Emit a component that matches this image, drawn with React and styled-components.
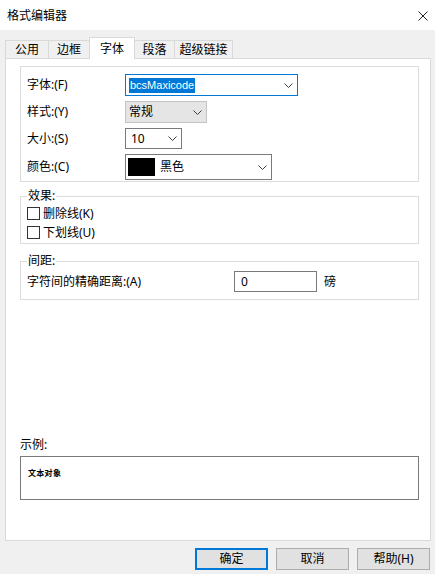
import React from 'react';
import styled, { createGlobalStyle } from 'styled-components';

const Global = createGlobalStyle`
  html, body { margin: 0; padding: 0; background: #f0f0f0; }
  body {
    font-family: "Noto Sans", "Noto Sans CJK SC", sans-serif;
    font-size: 12px;
    color: #000;
  }
  * { box-sizing: border-box; }
`;

const Window = styled.div`
  width: 435px;
  height: 574px;
  background: #f0f0f0;
  display: flex;
  flex-direction: column;
  overflow: hidden;
  font-family: "Noto Sans", "Noto Sans CJK SC", sans-serif;
  font-size: 12px;
  line-height: 14px;
`;

const TitleBar = styled.div`
  height: 30px;
  flex: none;
  background: #fff;
  display: flex;
  align-items: center;
  justify-content: space-between;
  padding: 0 7px;
`;

const Title = styled.span`
  font-size: 12px;
  line-height: 14px;
  margin-top: 1px;
`;

const CloseIcon = styled.svg`
  width: 10px;
  height: 10px;
  margin-top: 2px;
`;

const TabStrip = styled.div`
  flex: none;
  height: 21px;
  margin-top: 7px;
  padding-left: 5px;
  display: flex;
  align-items: flex-end;
  position: relative;
  z-index: 1;
`;

const Tab = styled.div`
  width: ${p => p.$w}px;
  height: ${p => (p.$active ? 22 : 18)}px;
  margin-bottom: ${p => (p.$active ? -1 : 0)}px;
  margin-left: -1px;
  &:first-child { margin-left: 0; }
  border: 1px solid #d9d9d9;
  border-bottom: none;
  background: ${p => (p.$active ? '#fff' : '#f0f0f0')};
  display: flex;
  align-items: center;
  justify-content: center;
  padding-top: ${p => (p.$active ? 0 : 1)}px;
  font-size: 12px;
  position: relative;
  z-index: ${p => (p.$active ? 2 : 1)};
`;

const Panel = styled.div`
  flex: none;
  height: 483px;
  margin: 0 4px 0 5px;
  background: #fff;
  border: 1px solid #d9d9d9;
  display: flex;
  flex-direction: column;
  padding: 7px 11px 40px 14px;
`;

const FontGroup = styled.div`
  border: 1px solid #dcdcdc;
  padding: 7px 0 1px 6px;
  display: grid;
  grid-template-columns: 98px auto;
  row-gap: 5px;
  align-items: center;
  justify-items: start;
`;

const Label = styled.span`
  font-size: 12px;
  line-height: 14px;
  white-space: nowrap;
`;

const Combo = styled.div`
  width: ${p => p.$w}px;
  height: ${p => p.$h}px;
  border: 1px solid ${p => p.$border};
  background: ${p => p.$bg};
  display: flex;
  align-items: center;
  padding: 0 4px 0 ${p => p.$pl}px;
  gap: 5px;
`;

const ComboText = styled.span`
  flex: 1;
  font-size: 12px;
  line-height: 14px;
  white-space: nowrap;
`;

const Selected = styled.span`
  background: #0078d7;
  color: #fff;
  font-family: "Liberation Sans", "Noto Sans", sans-serif;
  font-size: 11px;
  line-height: 15px;
  padding: 0 1px 0 1px;
  display: inline-block;
`;

const Swatch = styled.span`
  width: 27px;
  height: 18px;
  background: #000;
  flex: none;
`;

const Chevron = styled.svg`
  width: 9px;
  height: 5px;
  flex: none;
`;

const Group = styled.fieldset`
  margin: ${p => p.$mt}px 0 0 0;
  border: 1px solid #dcdcdc;
  padding: ${p => p.$pt}px 0 ${p => p.$pb}px 6px;
  min-width: 0;
  display: flex;
  flex-direction: column;
`;

const Legend = styled.legend`
  padding: 0 1px;
  font-size: 12px;
  line-height: 14px;
`;

const CheckRow = styled.label`
  height: 19px;
  display: flex;
  align-items: center;
  gap: 3px;
  font-size: 12px;
`;

const CheckBox = styled.span`
  width: 13px;
  height: 13px;
  border: 1px solid #333;
  background: #fff;
  flex: none;
`;

const SpacingRow = styled.div`
  display: grid;
  grid-template-columns: 207px 83px auto;
  align-items: center;
`;

const NumberBox = styled.div`
  height: 21px;
  border: 1px solid #7a7a7a;
  display: flex;
  align-items: center;
  padding-left: 6px;
  font-size: 12px;
`;

const Unit = styled.span`
  margin-left: 7px;
  font-size: 12px;
`;

const SampleSection = styled.div`
  margin-top: auto;
  display: flex;
  flex-direction: column;
  gap: 4px;
`;

const SampleBox = styled.div`
  height: 44px;
  border: 1px solid #7a7a7a;
  padding: 11px 7px 0 7px;
  font-size: 8px;
  line-height: 10px;
  font-weight: 700;
  letter-spacing: 0.3px;
`;

const ButtonRow = styled.div`
  flex: none;
  display: flex;
  justify-content: flex-end;
  gap: 8px;
  padding: 0 5px 0 0;
  margin-top: 7px;
`;

const Button = styled.button`
  width: 73px;
  height: 22px;
  margin: 0;
  padding: 0;
  background: #e1e1e1;
  border: ${p => (p.$default ? '2px solid #0078d7' : '1px solid #adadad')};
  font-family: "Noto Sans", "Noto Sans CJK SC", sans-serif;
  font-size: 12px;
  line-height: 14px;
  color: #000;
`;

const Down = () => (
  <Chevron viewBox="0 0 9 5">
    <polyline points="0.5,0.5 4.5,4.5 8.5,0.5" fill="none" stroke="#3c3c3c" strokeWidth="1" />
  </Chevron>
);

export default function App() {
  return (
    <Window>
      <Global />
      <TitleBar>
        <Title>格式编辑器</Title>
        <CloseIcon viewBox="0 0 10 10">
          <path d="M0.5 0.5 L9.5 9.5 M9.5 0.5 L0.5 9.5" stroke="#222" strokeWidth="1" fill="none" />
        </CloseIcon>
      </TitleBar>
      <TabStrip>
        <Tab $w={44}>公用</Tab>
        <Tab $w={42}>边框</Tab>
        <Tab $w={46} $active>字体</Tab>
        <Tab $w={41}>段落</Tab>
        <Tab $w={59}>超级链接</Tab>
      </TabStrip>
      <Panel>
        <FontGroup>
          <Label>字体:(F)</Label>
          <Combo $w={173} $h={22} $border="#0078d7" $bg="#fff" $pl={3}>
            <ComboText><Selected>bcsMaxicode</Selected></ComboText>
            <Down />
          </Combo>
          <Label>样式:(Y)</Label>
          <Combo $w={82} $h={22} $border="#c4c4c4" $bg="#e5e5e5" $pl={3}>
            <ComboText>常规</ComboText>
            <Down />
          </Combo>
          <Label>大小:(S)</Label>
          <Combo $w={57} $h={21} $border="#7a7a7a" $bg="#fff" $pl={5}>
            <ComboText>10</ComboText>
            <Down />
          </Combo>
          <Label>颜色:(C)</Label>
          <Combo $w={147} $h={26} $border="#7a7a7a" $bg="#fff" $pl={2}>
            <Swatch />
            <ComboText>黑色</ComboText>
            <Down />
          </Combo>
        </FontGroup>

        <Group $mt={7} $pt={1} $pb={1}>
          <Legend>效果:</Legend>
          <CheckRow><CheckBox />删除线(K)</CheckRow>
          <CheckRow><CheckBox />下划线(U)</CheckRow>
        </Group>

        <Group $mt={10} $pt={3} $pb={7}>
          <Legend>间距:</Legend>
          <SpacingRow>
            <Label>字符间的精确距离:(A)</Label>
            <NumberBox>0</NumberBox>
            <Unit>磅</Unit>
          </SpacingRow>
        </Group>

        <SampleSection>
          <Label>示例:</Label>
          <SampleBox>文本对象</SampleBox>
        </SampleSection>
      </Panel>
      <ButtonRow>
        <Button $default>确定</Button>
        <Button>取消</Button>
        <Button>帮助(H)</Button>
      </ButtonRow>
    </Window>
  );
}
